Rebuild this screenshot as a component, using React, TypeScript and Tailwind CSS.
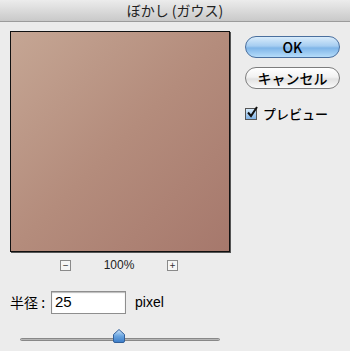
import React from 'react';

const font = { fontFamily: '"Noto Sans CJK JP", "Liberation Sans", sans-serif' };
const latin = { fontFamily: '"Liberation Sans", sans-serif' };

function Aqua({ label, primary }: { label: string; primary?: boolean }) {
  return (
    <button
      className={
        'h-[22px] w-[95px] rounded-full border text-[14px] font-medium leading-none text-black ' +
        (primary
          ? 'border-[#4a6f9e] bg-[linear-gradient(to_bottom,#d9ecfb_0%,#a6cdf1_45%,#7fb5e8_55%,#b5dcfa_100%)]'
          : 'border-[#7d7d7d] bg-[linear-gradient(to_bottom,#ffffff_0%,#f2f2f2_45%,#e2e2e2_55%,#fafafa_100%)]')
      }
      style={font}
    >
      {label}
    </button>
  );
}

function SmallBox({ children }: { children: React.ReactNode }) {
  return (
    <div className="flex h-[11px] w-[11px] items-center justify-center border border-[#8a8a8a] bg-[#f6f6f6] text-[10px] leading-none text-[#333]">
      {children}
    </div>
  );
}

export default function App() {
  return (
    <div className="flex h-[351px] w-[350px] flex-col bg-[#ececec]" style={font}>
      <div className="flex h-[22px] items-center justify-center border-b border-[#9c9c9c] bg-[linear-gradient(to_bottom,#ececec,#c9c9c9)] text-[14px] text-[#222]">
        ぼかし (ガウス)
      </div>
      <div className="flex pl-[10px] pt-[9px]">
        <div className="flex w-[220px] flex-col">
          <div className="h-[221px] w-[220px] border border-[#111] bg-[linear-gradient(135deg,#c5a694,#b48c7c_50%,#a6786c)] shadow-[1px_1px_0_#555]" />
          <div className="mt-[7px] flex items-center">
            <div className="ml-[50px]"><SmallBox>−</SmallBox></div>
            <div className="w-[96px] text-center text-[12px] leading-none text-[#222]" style={latin}>100%</div>
            <SmallBox>+</SmallBox>
          </div>
          <div className="mt-[20px] flex items-center">
            <span className="w-[41px] text-[14px] text-black">半径 :</span>
            <div className="flex h-[23px] w-[75px] items-center border border-[#8e8e8e] bg-white pl-[3px] text-[15px] shadow-[inset_0_1px_1px_#bbb]" style={latin}>
              25
            </div>
            <span className="ml-[9px] text-[14px] text-black" style={latin}>pixel</span>
          </div>
          <div className="relative mt-[15px] ml-[10px] h-[14px] w-[200px]">
            <div className="absolute left-0 right-0 top-[9px] h-[3px] rounded-full border border-[#888] bg-[#b5b5b5]" />
            <svg className="absolute left-[92px] top-0" width="14" height="14" viewBox="0 0 14 14">
              <defs>
                <linearGradient id="th" x1="0" y1="0" x2="0" y2="1">
                  <stop offset="0" stopColor="#cfe6fb" />
                  <stop offset="0.5" stopColor="#6aa5e0" />
                  <stop offset="1" stopColor="#3b7cc8" />
                </linearGradient>
              </defs>
              <path d="M7 0.5 L12.5 5.5 L12.5 12 Q12.5 13.5 11 13.5 L3 13.5 Q1.5 13.5 1.5 12 L1.5 5.5 Z" fill="url(#th)" stroke="#33609a" strokeWidth="1" />
            </svg>
          </div>
        </div>
        <div className="ml-[15px] flex flex-col">
          <div className="mt-[3px]"><Aqua label="OK" primary /></div>
          <div className="mt-[7px]"><Aqua label="キャンセル" /></div>
          <div className="mt-[15px] flex items-center">
            <div className="relative h-[12px] w-[12px] border border-[#555] bg-[linear-gradient(to_bottom,#d7ebfb,#7fb2e6)]">
              <svg className="absolute -top-[3px] left-0" width="13" height="13" viewBox="0 0 13 13">
                <path d="M2 6.5 L5 10 L11 1" fill="none" stroke="#111" strokeWidth="2" />
              </svg>
            </div>
            <span className="ml-[6px] text-[13px] font-medium text-black">プレビュー</span>
          </div>
        </div>
      </div>
    </div>
  );
}
